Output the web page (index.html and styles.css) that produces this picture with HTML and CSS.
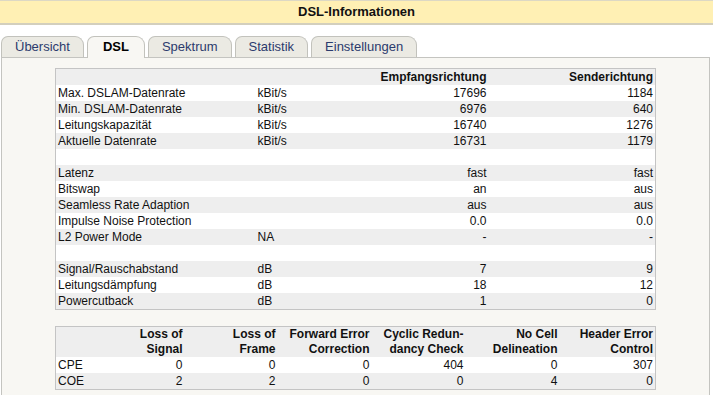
FILE: index.html
```html
<!DOCTYPE html>
<html lang="de">
<head>
<meta charset="UTF-8" />
<title>DSL-Informationen</title>
<link rel="stylesheet" href="styles.css">
</head>
<body>
<div class="titlebar">DSL-Informationen</div>
<div class="tabs">
<span class="tab">Übersicht</span>
<span class="tab active">DSL</span>
<span class="tab">Spektrum</span>
<span class="tab">Statistik</span>
<span class="tab">Einstellungen</span>
</div>
<div class="panel">
<table class="info">
<colgroup><col class="c-label"><col class="c-unit"><col class="c-val"><col class="c-val"></colgroup>
<tr><th></th><th></th><th class="num">Empfangsrichtung</th><th class="num">Senderichtung</th></tr>
<tr><td>Max. DSLAM-Datenrate</td><td>kBit/s</td><td class="num">17696</td><td class="num">1184</td></tr>
<tr><td>Min. DSLAM-Datenrate</td><td>kBit/s</td><td class="num">6976</td><td class="num">640</td></tr>
<tr><td>Leitungskapazität</td><td>kBit/s</td><td class="num">16740</td><td class="num">1276</td></tr>
<tr><td>Aktuelle Datenrate</td><td>kBit/s</td><td class="num">16731</td><td class="num">1179</td></tr>
<tr><td></td><td></td><td></td><td></td></tr>
<tr><td>Latenz</td><td></td><td class="num">fast</td><td class="num">fast</td></tr>
<tr><td>Bitswap</td><td></td><td class="num">an</td><td class="num">aus</td></tr>
<tr><td>Seamless Rate Adaption</td><td></td><td class="num">aus</td><td class="num">aus</td></tr>
<tr><td>Impulse Noise Protection</td><td></td><td class="num">0.0</td><td class="num">0.0</td></tr>
<tr><td>L2 Power Mode</td><td>NA</td><td class="num">-</td><td class="num">-</td></tr>
<tr><td></td><td></td><td></td><td></td></tr>
<tr><td>Signal/Rauschabstand</td><td>dB</td><td class="num">7</td><td class="num">9</td></tr>
<tr><td>Leitungsdämpfung</td><td>dB</td><td class="num">18</td><td class="num">12</td></tr>
<tr><td>Powercutback</td><td>dB</td><td class="num">1</td><td class="num">0</td></tr>
</table>
<table class="errors">
<colgroup><col class="e-label"><col class="e-b"><col class="e-a"><col class="e-b"><col class="e-b"><col class="e-b"><col class="e-c"></colgroup>
<tr><th></th><th class="num">Loss of<br>Signal</th><th class="num">Loss of<br>Frame</th><th class="num">Forward Error<br>Correction</th><th class="num">Cyclic Redun-<br>dancy Check</th><th class="num">No Cell<br>Delineation</th><th class="num">Header Error<br>Control</th></tr>
<tr><td>CPE</td><td class="num">0</td><td class="num">0</td><td class="num">0</td><td class="num">404</td><td class="num">0</td><td class="num">307</td></tr>
<tr><td>COE</td><td class="num">2</td><td class="num">2</td><td class="num">0</td><td class="num">0</td><td class="num">4</td><td class="num">0</td></tr>
</table>
</div>
</body>
</html>
```

FILE: styles.css
```css
body { margin: 0; font-family: "Liberation Sans", Arial, sans-serif; background: #fff; color: #000; }

.titlebar { height: 22px; line-height: 22px; background: #fff0b4; border-top: 1px solid #ddd8c4; border-bottom: 2px solid #d3cfbd; text-align: center; font-weight: bold; font-size: 13px; color: #111; }

.tabs { display: flex; align-items: flex-start; gap: 3px; margin: 11px 0 -1px 1px; height: 22px; }

.tab { height: 20px; line-height: 20px; padding: 0 13px; border: 1px solid #c2c2bc; border-bottom: none; border-radius: 7px 9px 0 0; background: #ebeae3; color: #2b3b6d; font-size: 13px; }

.tab.active { height: 21px; padding: 0 15px; background: #f8f7f3; color: #000; font-weight: bold; position: relative; z-index: 1; }

.panel { background: #f8f7f3; border: 1px solid #c4c4c0; margin: 0 3px 0 1px; padding: 10px 0 20px; min-height: 320px; }

table { border-collapse: collapse; table-layout: fixed; width: 600px; margin: 0 auto; border: 1px solid #c4c4c4; font-size: 12px; }

tr { background: #fff; }
tr:nth-child(odd) { background: #eee; }

td, th { padding: 0 2px; height: 16px; line-height: 16px; white-space: nowrap; text-align: left; color: #111; }

th { font-weight: bold; }

.num { text-align: right; }

.c-label { width: 200px; }
.c-unit { width: 66px; }
.c-val { width: 167px; }

.errors { margin-top: 16px; }
.errors th { line-height: 15px; height: 30px; vertical-align: bottom; }

.e-label { width: 35px; }
.e-a { width: 93px; }
.e-b { width: 94px; }
.e-c { width: 96px; }
```
